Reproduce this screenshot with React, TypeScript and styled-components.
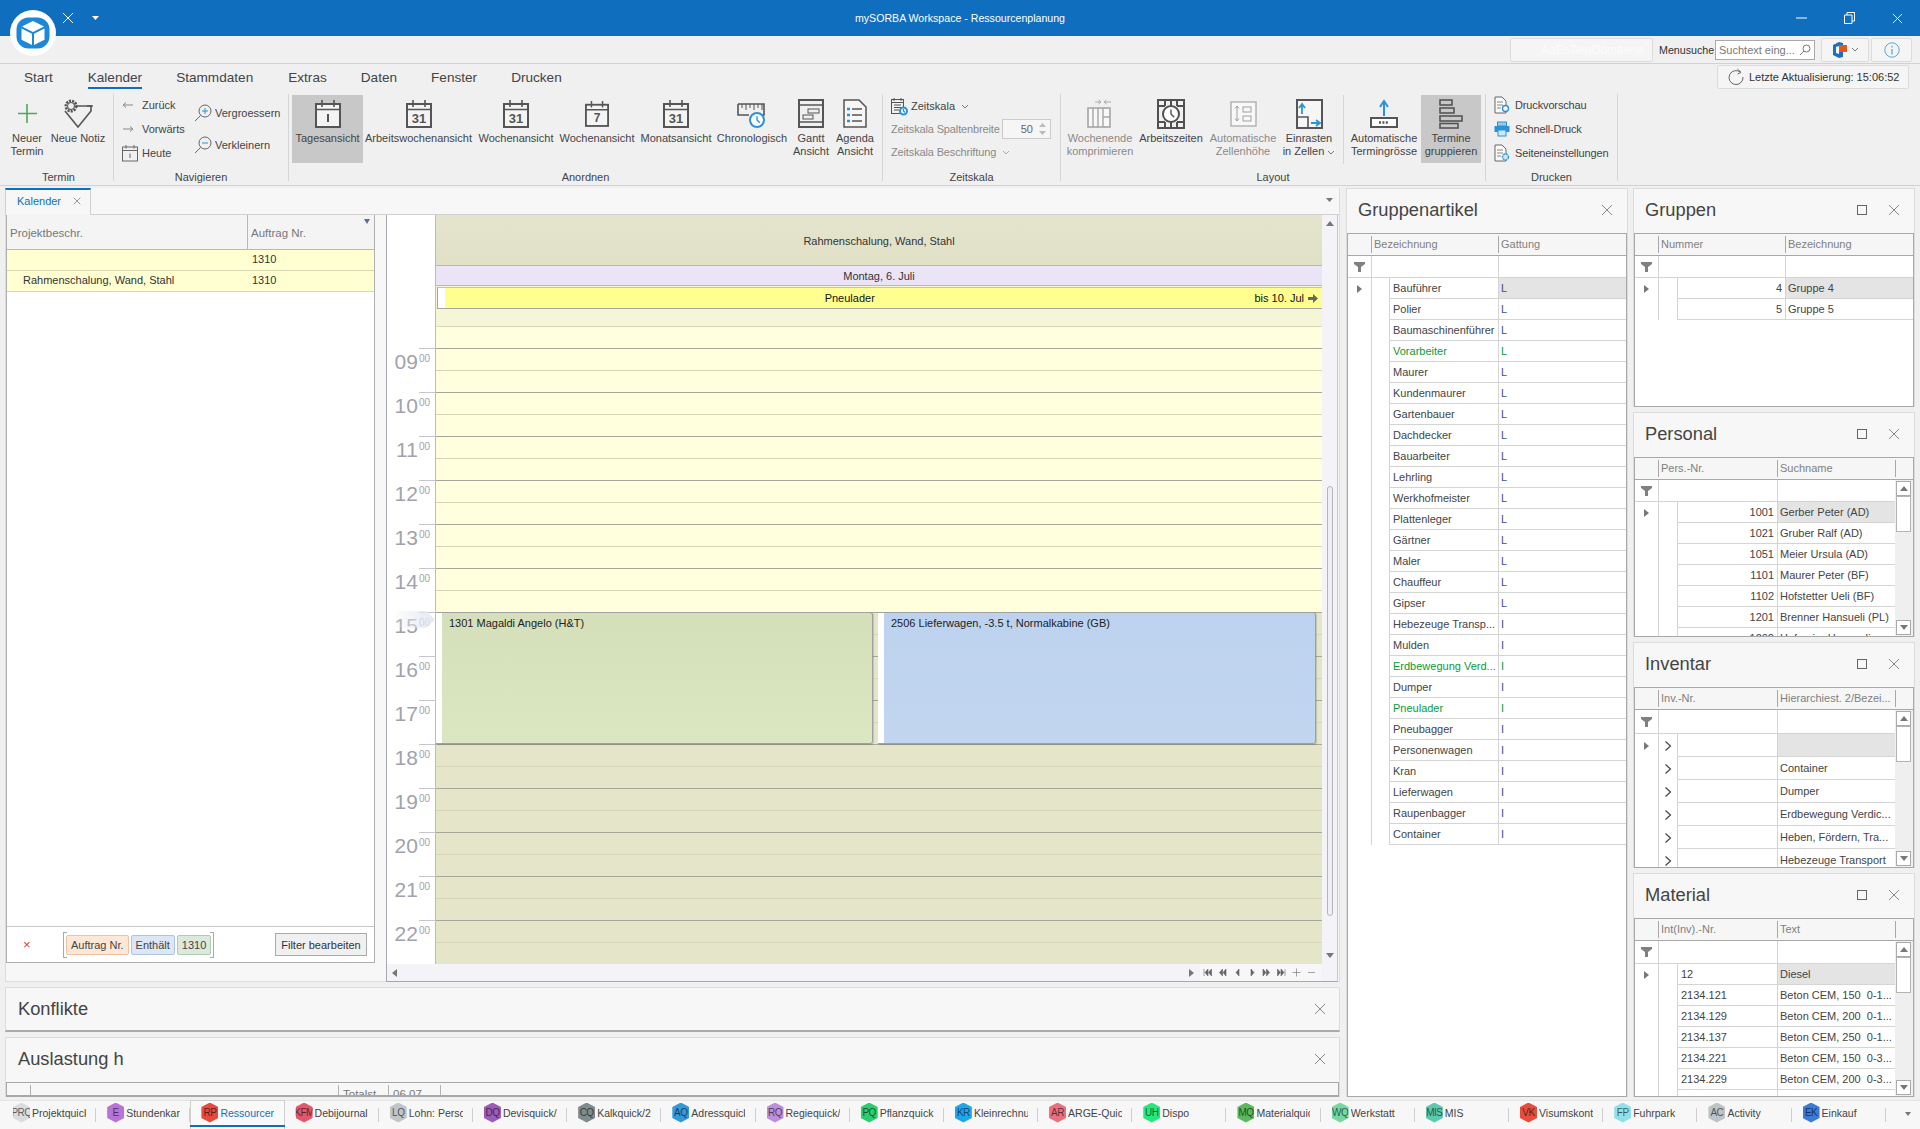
import React from "react";
import styled, { createGlobalStyle } from "styled-components";

const GlobalStyle = createGlobalStyle`
  html, body {
    margin: 0;
    padding: 0;
    background: #f0f0f0;
  }
  * {
    box-sizing: border-box;
  }
  body {
    font-family: "Liberation Sans", Arial, sans-serif;
    font-size: 11px;
    color: #444;
  }
`;

const BLUE = "#106ebe";
const ICON = "#555";
const ACCENT = "#2a93d8";

const Page = styled.div`
  position: relative;
  width: 1920px;
  height: 1129px;
  overflow: hidden;
  display: flex;
  flex-direction: column;
`;

/* title bar */
const TitleBar = styled.div`
  height: 36px;
  background: ${BLUE};
  display: grid;
  grid-template-columns: 1fr auto 1fr;
  align-items: center;
  color: #fff;
  flex: none;
`;
const TitleLeft = styled.div`
  display: flex;
  align-items: center;
  gap: 18px;
  padding-left: 62px;
`;
const TitleText = styled.div`
  font-size: 10.6px;
`;
const WindowButtons = styled.div`
  display: flex;
  justify-content: flex-end;
  margin-right: -1px;
`;
const WindowButton = styled.div`
  width: 48px;
  height: 36px;
  display: flex;
  align-items: center;
  justify-content: center;
`;
const Logo = styled.div`
  position: absolute;
  left: 10px;
  top: 10px;
  width: 46px;
  height: 46px;
  border-radius: 50%;
  background: #fff;
  display: flex;
  align-items: center;
  justify-content: center;
`;

/* row with the menu search */
const QuickRow = styled.div`
  height: 27px;
  flex: none;
  display: flex;
  align-items: center;
  justify-content: flex-end;
  padding: 0 8px 0 0;
  background: #f0f0f0;
`;
const DomainBox = styled.div`
  width: 143px;
  height: 24px;
  border: 1px solid #dcdcdc;
  background: #f5f5f5;
  border-radius: 2px;
  color: #fcfcfc;
  font-size: 12px;
  line-height: 22px;
  padding-left: 30px;
  white-space: nowrap;
  overflow: hidden;
`;
const SearchLabel = styled.div`
  width: 56px;
  margin-left: 6px;
  color: #333;
  font-size: 10.7px;
`;
const SearchInput = styled.div`
  width: 100px;
  height: 20px;
  border: 1px solid #aaa;
  background: #fff;
  color: #777;
  font-size: 11px;
  line-height: 18px;
  padding-left: 3px;
  display: flex;
  justify-content: space-between;
  align-items: center;
  padding-right: 3px;
  white-space: nowrap;
`;
const ToolButton = styled.div<{ $w: number; $ml: number }>`
  width: ${(p) => p.$w}px;
  margin-left: ${(p) => p.$ml}px;
  height: 24px;
  border: 1px solid #dcdcdc;
  border-radius: 2px;
  background: #f5f5f5;
  display: flex;
  align-items: center;
  justify-content: center;
  gap: 3px;
`;

/* ribbon */
const Ribbon = styled.div`
  height: 123px;
  flex: none;
  border-top: 1px solid #d2d2d2;
  border-bottom: 1px solid #d2d2d2;
  background: #f0f0f0;
  display: flex;
  flex-direction: column;
`;
const RibbonTabs = styled.div`
  height: 27px;
  display: flex;
  align-items: flex-start;
  padding: 0 11px 0 24px;
`;
const RibbonTab = styled.div<{ $active?: boolean; $ml: number }>`
  margin-left: ${(p) => p.$ml}px;
  margin-top: 5px;
  height: 20px;
  font-size: 13.6px;
  line-height: 18px;
  color: #444;
  border-bottom: ${(p) => (p.$active ? `2px solid ${BLUE}` : "none")};
`;
const UpdateButton = styled.div`
  margin-left: auto;
  margin-top: 1px;
  width: 192px;
  height: 24px;
  border: 1px solid #dcdcdc;
  background: #f5f5f5;
  border-radius: 2px;
  display: flex;
  align-items: center;
  gap: 5px;
  padding-left: 10px;
  font-size: 11px;
  color: #333;
`;
const RibbonBody = styled.div`
  display: flex;
  padding: 3px 0 0 4px;
`;
const Group = styled.div<{ $w: number }>`
  width: ${(p) => p.$w}px;
  height: 90px;
  display: flex;
  flex-direction: column;
  padding-top: 1px;
`;
const GroupItems = styled.div<{ $pl: number }>`
  height: 68px;
  display: flex;
  padding-left: ${(p) => p.$pl}px;
`;
const GroupLabel = styled.div`
  margin-top: auto;
  line-height: 14px;
  text-align: center;
  color: #444;
`;
const GroupSep = styled.div`
  width: 1px;
  height: 87px;
  background: #d6d6d6;
  flex: none;
`;
const ItemSep = styled.div`
  width: 1px;
  height: 69px;
  margin: 0 3px 0 3px;
  background: #d6d6d6;
  flex: none;
`;
const LargeButton = styled.div<{ $w: number; $on?: boolean; $off?: boolean }>`
  width: ${(p) => p.$w}px;
  height: 68px;
  flex: none;
  background: ${(p) => (p.$on ? "#c8c8c8" : "transparent")};
  color: ${(p) => (p.$off ? "#8a8a8a" : "#444")};
  display: flex;
  flex-direction: column;
  align-items: center;
  text-align: center;
  line-height: 13px;
  white-space: nowrap;
`;
const LargeIcon = styled.div`
  height: 37px;
  flex: none;
  display: flex;
  align-items: center;
  justify-content: center;
`;
const LargeText = styled.div`
  white-space: nowrap;
`;
const SmallColumn = styled.div<{ $w: number; $gap: number; $pt: number }>`
  width: ${(p) => p.$w}px;
  display: flex;
  flex-direction: column;
  gap: ${(p) => p.$gap}px;
  padding-top: ${(p) => p.$pt}px;
  flex: none;
`;
const SmallItem = styled.div<{ $off?: boolean; $tight?: boolean }>`
  height: 16px;
  display: flex;
  align-items: center;
  white-space: nowrap;
  color: ${(p) => (p.$off ? "#8a8a8a" : "#444")};
  letter-spacing: ${(p) => (p.$off || p.$tight ? "-0.14px" : "normal")};
`;
const SmallIcon = styled.div<{ $w: number }>`
  width: ${(p) => p.$w}px;
  flex: none;
  display: flex;
  align-items: center;
`;
const SpinBox = styled.div`
  width: 49px;
  height: 20px;
  margin-left: 2px;
  border: 1px solid #ccc;
  background: #f6f6f6;
  color: #666;
  display: flex;
  align-items: center;
  justify-content: flex-end;
  gap: 6px;
  padding-right: 4px;
  font-size: 11px;
`;

/* workspace */
const Workspace = styled.div`
  height: 914px;
  flex: none;
  display: flex;
  padding: 2px 0 3px 5px;
  gap: 6px;
  background: #f0f0f0;
`;
const MainColumn = styled.div`
  width: 1335px;
  display: flex;
  flex-direction: column;
  gap: 5px;
`;
const DocHost = styled.div`
  height: 794px;
  flex: none;
  border: 1px solid #dcdcdc;
  border-top: none;
  background: #f7f7f7;
  display: flex;
  flex-direction: column;
`;
const DocStrip = styled.div`
  height: 27px;
  flex: none;
  border-bottom: 1px solid #d0d0d0;
  display: flex;
  justify-content: space-between;
  margin-left: -1px;
  padding-right: 6px;
`;
const DocTab = styled.div`
  width: 86px;
  height: 27px;
  border-top: 2px solid ${BLUE};
  border-left: 1px solid #d0d0d0;
  border-right: 1px solid #d0d0d0;
  background: #f7f7f7;
  color: ${BLUE};
  font-size: 11px;
  display: flex;
  align-items: center;
  justify-content: space-between;
  padding: 0 9px 3px 11px;
`;
const DocBody = styled.div`
  flex: 1;
  min-height: 0;
  display: flex;
  gap: 11px;
  padding: 0 1px 0 0;
`;

/* left project list */
const ProjectList = styled.div`
  width: 369px;
  height: 748px;
  flex: none;
  border: 1px solid #b0b0b0;
  border-top: none;
  background: #fff;
  display: flex;
  flex-direction: column;
`;
const ProjectHead = styled.div`
  height: 35px;
  flex: none;
  display: grid;
  grid-template-columns: 240px 1fr;
  background: #f4f4f4;
  border-bottom: 1px solid #b8b8b8;
  color: #777;
  font-size: 11.5px;
`;
const ProjectHeadCell = styled.div<{ $line?: boolean }>`
  position: relative;
  padding: 12px 0 0 3px;
  border-left: ${(p) => (p.$line ? "1px solid #b8b8b8" : "none")};
`;
const HeadFunnel = styled.div`
  position: absolute;
  right: 4px;
  top: 4px;
  width: 0;
  height: 0;
  border-left: 3px solid transparent;
  border-right: 3px solid transparent;
  border-top: 5px solid #5b6f9a;
`;
const ProjectRow = styled.div`
  height: 21px;
  flex: none;
  display: grid;
  grid-template-columns: 240px 1fr;
  background: #ffffd2;
  border-bottom: 1px solid #d8d8b0;
  line-height: 19px;
  font-size: 11px;
  color: #333;
`;
const ProjectCell = styled.div<{ $indent?: number }>`
  padding-left: ${(p) => p.$indent ?? 5}px;
`;
const ProjectSpacer = styled.div`
  flex: 1;
`;
const FilterBar = styled.div`
  height: 36px;
  flex: none;
  border-top: 1px solid #c8c8c8;
  display: flex;
  align-items: center;
  padding: 0 7px 0 16px;
`;
const FilterRemove = styled.div`
  width: 40px;
  color: #d93a4a;
  font-size: 13px;
`;
const FilterBracket = styled.div`
  display: flex;
  gap: 2px;
  height: 26px;
  padding: 3px 2px;
  border-left: 1px solid #aaa;
  border-right: 1px solid #aaa;
  background-image: linear-gradient(#aaa, #aaa), linear-gradient(#aaa, #aaa), linear-gradient(#aaa, #aaa),
    linear-gradient(#aaa, #aaa);
  background-size: 3px 1px;
  background-repeat: no-repeat;
  background-position: left top, right top, left bottom, right bottom;
`;
const FilterChip = styled.div<{ $bg: string; $line: string }>`
  height: 20px;
  padding: 0 4px;
  border: 1px solid ${(p) => p.$line};
  border-radius: 2px;
  background: ${(p) => p.$bg};
  line-height: 18px;
  font-size: 11px;
  color: #444;
`;
const FilterEdit = styled.div`
  margin-left: auto;
  width: 92px;
  height: 23px;
  border: 1px solid #aaa;
  background: #f0f0f0;
  text-align: center;
  line-height: 22px;
  font-size: 11px;
  color: #333;
`;

/* calendar */
const Calendar = styled.div`
  width: 952px;
  height: 767px;
  flex: none;
  border-left: 1px solid #a8a8b4;
  border-right: 1px solid #c8c8d0;
  border-bottom: 1px solid #a8a8b4;
  display: flex;
  flex-direction: column;
  background: #f4f4f8;
`;
const CalendarTop = styled.div`
  height: 749px;
  flex: none;
  display: flex;
`;
const TimeColumn = styled.div`
  width: 48px;
  flex: none;
  position: relative;
  background: #fff;
  overflow: hidden;
`;
const TimeSpacer = styled.div`
  height: 133px;
`;
const HourCell = styled.div`
  height: 44px;
  position: relative;
  display: flex;
  justify-content: flex-end;
  padding-right: 5px;
  color: #a2a2ac;
  &::before {
    content: "";
    position: absolute;
    left: 32px;
    right: 0;
    top: 0;
    border-top: 1px solid #c6c6d0;
  }
`;
const HourBig = styled.span`
  font-size: 21px;
  line-height: 28px;
`;
const HourSmall = styled.span`
  font-size: 10px;
  line-height: 22px;
  margin-left: 1px;
`;
const NowMarker = styled.div`
  position: absolute;
  left: 8px;
  top: 396px;
  width: 40px;
  height: 17px;
  background: linear-gradient(90deg, rgba(235, 238, 248, 0.1), #e4e8f4);
  clip-path: polygon(0 0, 78% 0, 100% 50%, 78% 100%, 0 100%);
`;
const DayColumn = styled.div`
  width: 887px;
  flex: none;
  border-left: 1px solid #c0c0a8;
  display: flex;
  flex-direction: column;
`;
const ResourceHead = styled.div`
  height: 51px;
  flex: none;
  background: linear-gradient(#e5e5cf, #e0e0c6);
  border-bottom: 1px solid #bcbca6;
  display: flex;
  align-items: center;
  justify-content: center;
  padding-top: 1px;
  color: #333;
  font-size: 11px;
`;
const DayHead = styled.div`
  height: 20px;
  flex: none;
  background: #ebe4f6;
  border-bottom: 1px solid #b8b8c0;
  text-align: center;
  line-height: 20px;
  color: #333;
  font-size: 11px;
`;
const AllDayRow = styled.div`
  height: 23px;
  flex: none;
  padding: 1px 0 0 1px;
  background: #f5f5d8;
`;
const AllDayBar = styled.div`
  height: 22px;
  background: #ffff90;
  border: 1px solid #a6a6a6;
  border-right: none;
  border-top-color: #c8c8a0;
  display: grid;
  grid-template-columns: 7px 1fr auto;
  align-items: center;
  font-size: 11px;
  color: #111;
`;
const AllDayStripe = styled.div`
  height: 100%;
  background: #fff;
`;
const AllDayTitle = styled.div`
  text-align: center;
`;
const AllDayEnd = styled.div`
  display: flex;
  align-items: center;
  gap: 4px;
  padding-right: 4px;
`;
const Slots = styled.div`
  position: relative;
  flex: 1;
  min-height: 0;
  overflow: hidden;
`;
const Slot = styled.div<{ $h: number; $line: string; $bg: string }>`
  height: ${(p) => p.$h}px;
  background: ${(p) => p.$bg};
  border-top: 1px solid ${(p) => p.$line};
`;
const Appointment = styled.div<{ $left: number; $width: number; $from: string; $to: string }>`
  position: absolute;
  left: ${(p) => p.$left}px;
  width: ${(p) => p.$width}px;
  top: 303px;
  height: 132px;
  border: 1px solid #a0a0a0;
  border-left: none;
  border-radius: 0 3px 3px 0;
  background: linear-gradient(${(p) => p.$from}, ${(p) => p.$to});
  display: flex;
  box-shadow: 1px 1px 1px rgba(0, 0, 0, 0.15);
  color: #222;
  font-size: 11px;
`;
const AppointmentStripe = styled.div`
  width: 6px;
  flex: none;
  background: #fff;
`;
const AppointmentText = styled.div`
  padding: 4px 0 0 7px;
`;
const VScroll = styled.div`
  width: 15px;
  flex: none;
  background: #f4f4f8;
  position: relative;
  display: flex;
  flex-direction: column;
  align-items: center;
  padding: 6px 0;
  justify-content: space-between;
`;
const VThumb = styled.div`
  position: absolute;
  left: 5px;
  top: 271px;
  width: 6px;
  height: 430px;
  border: 1px solid #b4b4bc;
  border-radius: 3px;
  background: #f0f0f4;
`;
const HScroll = styled.div`
  flex: 1;
  display: flex;
  align-items: center;
  padding-left: 5px;
`;
const HScrollGap = styled.div`
  flex: 1;
`;
const Navigator = styled.div`
  width: 121px;
  height: 100%;
  margin: 0 16px 0 6px;
  background: #f7f7fa;
  display: flex;
  align-items: center;
  justify-content: space-between;
  padding: 0 5px 0 3px;
`;

/* docked panels */
const DockPanel = styled.div<{ $h?: number; $w?: number; $fill?: boolean }>`
  ${(p) => (p.$h ? `height: ${p.$h}px; flex: none;` : "")}
  ${(p) => (p.$w ? `width: ${p.$w}px; flex: none;` : "")}
  ${(p) => (p.$fill ? "flex: 1; min-height: 0;" : "")}
  border: 1px solid #dcdcdc;
  border-bottom: none;
  background: #f7f7f7;
  display: flex;
  flex-direction: column;
  overflow: hidden;
`;
const PanelHead = styled.div`
  height: 44px;
  flex: none;
  display: flex;
  align-items: center;
  justify-content: space-between;
  padding: 0 12px 3px 11px;
`;
const PanelTitle = styled.div`
  font-size: 18.3px;
  color: #444;
`;
const PanelIcons = styled.div`
  display: flex;
  align-items: center;
  gap: 16px;
`;
const PanelIcon = styled.div`
  width: 16px;
  display: flex;
  justify-content: center;
`;
const CollapsedPanel = styled.div`
  height: 45px;
  flex: none;
  border: 1px solid #dcdcdc;
  border-bottom: 2px solid #aaa;
  background: #f7f7f7;
  display: flex;
  align-items: center;
  justify-content: space-between;
  padding: 0 11px 0 12px;
`;
const LoadPanel = styled.div`
  flex: 1;
  min-height: 0;
  border: 1px solid #dcdcdc;
  border-bottom: none;
  background: #f7f7f7;
  display: flex;
  flex-direction: column;
`;
const LoadHead = styled.div`
  flex: 1;
  display: flex;
  align-items: center;
  justify-content: space-between;
  padding: 0 11px 2px 12px;
`;
const LoadGrid = styled.div`
  height: 15px;
  flex: none;
  border: 1px solid #a8a8a8;
  border-bottom-width: 2px;
  display: grid;
  grid-template-columns: 23px 308px 50px 52px 1fr;
  overflow: hidden;
  color: #777;
  font-size: 11.5px;
`;
const LoadCell = styled.div<{ $line?: boolean }>`
  border-left: ${(p) => (p.$line ? "1px solid #b4b4b4" : "none")};
  padding: 3px 0 0 4px;
  margin-top: 2px;
  white-space: nowrap;
`;
const RightColumn = styled.div`
  width: 282px;
  margin-left: -1px;
  display: flex;
  flex-direction: column;
  gap: 5px;
`;

/* small data grids */
const GridBox = styled.div`
  flex: 1;
  min-height: 0;
  border: 1px solid #a8a8a8;
  background: #fff;
  display: flex;
  flex-direction: column;
  overflow: hidden;
`;
const GridHeadRow = styled.div<{ $cols: string }>`
  height: 22px;
  flex: none;
  display: grid;
  grid-template-columns: ${(p) => p.$cols};
  background: #f6f6f6;
  border-bottom: 1px solid #a8a8a8;
  color: #808080;
  font-size: 11px;
  line-height: 20px;
  white-space: nowrap;
`;
const HeadCell = styled.div<{ $span?: number; $line?: boolean }>`
  grid-column: span ${(p) => p.$span ?? 1};
  padding-left: 3px;
  overflow: hidden;
  position: relative;
  ${(p) =>
    p.$line
      ? `&::before { content: ""; position: absolute; left: 0; top: 2px; bottom: 2px; border-left: 1px solid #a8a8a8; }`
      : ""}
`;
const GridBody = styled.div`
  flex: 1;
  min-height: 0;
  display: flex;
`;
const GridRows = styled.div`
  flex: 1;
  min-width: 0;
  overflow: hidden;
`;
const FilterRow = styled.div<{ $cols: string; $h: number }>`
  height: ${(p) => p.$h}px;
  display: grid;
  grid-template-columns: ${(p) => p.$cols};
  border-bottom: 1px solid #d4d4d4;
`;
const FilterIconCell = styled.div`
  display: flex;
  align-items: center;
  justify-content: center;
`;
const BlankCell = styled.div<{ $span?: number }>`
  grid-column: span ${(p) => p.$span ?? 1};
  border-left: 1px solid #d4d4d4;
`;
const DataRow = styled.div<{ $cols: string; $h: number }>`
  height: ${(p) => p.$h}px;
  display: grid;
  grid-template-columns: ${(p) => p.$cols};
  font-size: 11px;
`;
const IndicatorCell = styled.div`
  display: flex;
  align-items: center;
  justify-content: center;
`;
const IndentCell = styled.div`
  border-left: 1px solid #d4d4d4;
  display: flex;
  align-items: center;
  justify-content: center;
`;
const DataCell = styled.div<{ $color?: string; $selected?: boolean; $right?: boolean; $pl?: number }>`
  border-left: 1px solid #d4d4d4;
  border-bottom: 1px solid #d4d4d4;
  color: ${(p) => p.$color ?? "#444"};
  background: ${(p) => (p.$selected ? "#e4e4e4" : "#fff")};
  padding: 0 3px 0 ${(p) => p.$pl ?? 3}px;
  display: flex;
  align-items: center;
  justify-content: ${(p) => (p.$right ? "flex-end" : "flex-start")};
  white-space: pre;
  overflow: hidden;
`;
const GridScroll = styled.div`
  width: 18px;
  flex: none;
  background: #efefef;
  display: flex;
  flex-direction: column;
  padding: 1px 2px 1px 1px;
`;
const ScrollButton = styled.div`
  height: 15px;
  flex: none;
  background: #fff;
  border: 1px solid #aaa;
  display: flex;
  align-items: center;
  justify-content: center;
`;
const ScrollThumb = styled.div<{ $h: number }>`
  height: ${(p) => p.$h}px;
  flex: none;
  background: #fff;
  border: 1px solid #b4b4b4;
`;
const ScrollGap = styled.div`
  flex: 1;
`;

/* module tabs */
const ModuleBar = styled.div`
  flex: 1;
  background: #f7f7f7;
  border-top: 1px solid #e4e4e4;
  display: flex;
  padding-left: 2px;
  position: relative;
`;
const ModuleTab = styled.div<{ $active?: boolean }>`
  width: 94.2px;
  flex: none;
  display: flex;
  align-items: center;
  gap: 2px;
  padding: 0 0 5px 11px;
  position: relative;
  color: ${(p) => (p.$active ? BLUE : "#444")};
  ${(p) =>
    p.$active
      ? `border: 1px solid #d0d0d0; border-bottom: none; margin-top: -1px; padding-left: 10px; background: #f9f9f9;
         &::after { content: ""; position: absolute; left: -1px; right: -1px; bottom: 2px; height: 2px; background: ${BLUE}; }`
      : `&::after { content: ""; position: absolute; right: 0; top: 7px; bottom: 7px; border-right: 1px solid #d0d0d0; }`}
`;
const ModuleHex = styled.div<{ $color: string }>`
  width: 17px;
  height: 20px;
  flex: none;
  background: ${(p) => p.$color};
  clip-path: polygon(50% 0, 100% 22%, 100% 78%, 50% 100%, 0 78%, 0 22%);
  display: flex;
  align-items: center;
  justify-content: center;
  font-size: 10px;
  letter-spacing: -0.5px;
  color: rgba(0, 0, 0, 0.6);
  white-space: nowrap;
`;
const ModuleLabel = styled.div`
  width: 54px;
  overflow: hidden;
  white-space: nowrap;
  font-size: 10.5px;
`;
const ModuleMore = styled.div`
  position: absolute;
  right: 9px;
  top: 11px;
  width: 0;
  height: 0;
  border-left: 3px solid transparent;
  border-right: 3px solid transparent;
  border-top: 4px solid #777;
`;

/* drawings */
const CloseX = ({ size = 12, color = "#8a8a8a" }: { size?: number; color?: string }) => (
  <svg width={size} height={size} viewBox="0 0 12 12">
    <path d="M1 1 11 11M11 1 1 11" stroke={color} strokeWidth="1" fill="none" />
  </svg>
);
const MaxBox = () => (
  <svg width="10" height="10" viewBox="0 0 10 10">
    <rect x="0.5" y="0.5" width="9" height="9" stroke="#666" fill="none" />
  </svg>
);
const Tri = ({ dir, color = "#777" }: { dir: "up" | "down" | "left" | "right"; color?: string }) => {
  const pts = {
    up: "0,5 4,0 8,5",
    down: "0,0 8,0 4,5",
    left: "5,0 5,8 0,4",
    right: "0,0 0,8 5,4",
  }[dir];
  const vertical = dir === "up" || dir === "down";
  return (
    <svg width={vertical ? 8 : 5} height={vertical ? 5 : 8}>
      <polygon points={pts} fill={color} />
    </svg>
  );
};
const Chevron = ({ color = "#777" }: { color?: string }) => (
  <svg width="8" height="5" viewBox="0 0 8 5">
    <path d="M1 1 4 4 7 1" stroke={color} fill="none" />
  </svg>
);
const Funnel = () => (
  <svg width="11" height="10" viewBox="0 0 11 10">
    <path d="M0 0H11V2L7 5V10H4V5L0 2Z" fill="#808080" />
  </svg>
);
const Cal = ({ n, w = 26 }: { n?: string; w?: number }) => (
  <svg width={w} height="29" viewBox="0 0 26 29">
    <rect x="1" y="5" width="24" height="23" fill="#f4f4f4" stroke={ICON} strokeWidth="2" />
    <path d="M1 10.5H25M7 1V8M19 1V8" stroke={ICON} strokeWidth="1.6" fill="none" />
    {n ? (
      <text x="13" y="24" textAnchor="middle" fontSize="13" fontWeight="700" fill={ICON} fontFamily="Liberation Sans">
        {n}
      </text>
    ) : (
      <path d="M13 15V23" stroke={ICON} strokeWidth="2" />
    )}
  </svg>
);
const Clock = ({ x, y, r, color = ACCENT }: { x: number; y: number; r: number; color?: string }) => (
  <g>
    <circle cx={x} cy={y} r={r} fill="#fff" stroke={color} strokeWidth="2" />
    <path d={`M${x} ${y - r * 0.55}V${y}L${x + r * 0.4} ${y + r * 0.4}`} stroke={color} strokeWidth="1.4" fill="none" />
  </g>
);
const IconPlus = () => (
  <svg width="22" height="26" viewBox="0 0 22 26">
    <path d="M11 3V22M2 12.5H21" stroke="#4fa85a" strokeWidth="1.6" />
  </svg>
);
const IconNote = () => (
  <svg width="30" height="29" viewBox="0 0 30 29">
    <path d="M2 12 15 28 28 12V7H13" stroke={ICON} strokeWidth="1.6" fill="none" />
    <circle cx="8" cy="7" r="5" stroke={ICON} strokeWidth="3" strokeDasharray="2 1" fill="#f0f0f0" />
    <circle cx="8" cy="7" r="3.5" stroke={ICON} strokeWidth="1" fill="#f0f0f0" />
    <path d="M24 7H30" stroke={ICON} strokeWidth="1.4" />
  </svg>
);
const IconArrow = ({ back }: { back?: boolean }) => (
  <svg width="12" height="8" viewBox="0 0 12 8">
    <path d={back ? "M11 4H2M4 1.5 1 4 4 6.5" : "M1 4H10M8 1.5 11 4 8 6.5"} stroke="#888" fill="none" />
  </svg>
);
const IconToday = () => (
  <svg width="16" height="18" viewBox="0 0 16 18">
    <rect x="0.5" y="3" width="15" height="14" fill="none" stroke="#666" />
    <path d="M0.5 6.5H15.5M4 1V4.5M12 1V4.5M8 9.5V14" stroke="#666" fill="none" />
  </svg>
);
const IconZoom = ({ plus }: { plus?: boolean }) => (
  <svg width="18" height="18" viewBox="0 0 18 18">
    <circle cx="11" cy="7" r="6" fill="none" stroke="#666" />
    <path d="M6.5 11.5 1 17" stroke="#666" fill="none" />
    <path d={plus ? "M8 7H14M11 4V10" : "M8 7H14"} stroke={ACCENT} fill="none" />
  </svg>
);
const IconChrono = () => (
  <svg width="30" height="30" viewBox="0 0 30 30">
    <path d="M1 5H27V16H15M1 5V16H12" fill="none" stroke={ICON} strokeWidth="1.6" />
    <path d="M5 5V9M9 5V11M13 5V9M17 5V11M21 5V9M25 5V11" stroke={ICON} />
    <Clock x={20} y={21} r={7} />
  </svg>
);
const IconGantt = () => (
  <svg width="26" height="29" viewBox="0 0 26 29">
    <rect x="1" y="1" width="24" height="27" fill="none" stroke={ICON} strokeWidth="2" />
    <path d="M1 6H25M1 23H25" stroke={ICON} strokeWidth="1.6" />
    <rect x="10" y="10" width="11" height="4" fill="none" stroke={ICON} />
    <rect x="5" y="16" width="10" height="4" fill="none" stroke={ICON} />
  </svg>
);
const IconAgenda = () => (
  <svg width="24" height="29" viewBox="0 0 24 29">
    <path d="M1 1H16L23 8V28H1Z" fill="#f6f6f6" stroke={ICON} strokeWidth="1.5" />
    <path d="M9 10H19M9 16H19M9 22H19" stroke={ICON} strokeWidth="1.5" />
    <path d="M4 10H7M4 16H7M4 22H7" stroke={ACCENT} strokeWidth="2.4" />
  </svg>
);
const IconScale = () => (
  <svg width="17" height="19" viewBox="0 0 17 19">
    <rect x="0.5" y="2.5" width="12" height="14" fill="none" stroke="#555" />
    <path d="M0.5 5.5H12.5M3 1V4M10 1V4M3 8H10M3 10.5H10M3 13H8" stroke="#555" fill="none" />
    <Clock x={12.5} y={14} r={3.5} />
  </svg>
);
const IconCompress = () => (
  <svg width="26" height="29" viewBox="0 0 26 29">
    <path d="M8 3H14M11.5 1 14 3 11.5 5M24 3H17M19.5 1 17 3 19.5 5" stroke="#aaa" fill="none" />
    <rect x="1" y="9" width="22" height="19" fill="#f8f8f8" stroke="#a6a6a6" strokeWidth="1.6" />
    <path d="M6 9V28M11 9V28M16 9V28M16 18H23" stroke="#a6a6a6" strokeWidth="1.4" />
  </svg>
);
const IconWorkTime = () => (
  <svg width="28" height="30" viewBox="0 0 28 30">
    <rect x="1" y="1" width="26" height="28" fill="#f0f0f0" stroke="#505050" strokeWidth="2" />
    <path d="M1 7H8M20 7H27M1 23H8M20 23H27M8 1V7M20 1V7M8 23V29M20 23V29M14 1V7M14 23V29" stroke="#505050" strokeWidth="2" />
    <Clock x={14} y={15} r={8} color="#505050" />
  </svg>
);
const IconCellHeight = () => (
  <svg width="27" height="26" viewBox="0 0 27 26">
    <rect x="1" y="1" width="25" height="24" fill="#f8f8f8" stroke="#b0b0b0" strokeWidth="1.4" />
    <path d="M7 5V20M5 7.5 7 5 9 7.5M5 17.5 7 20 9 17.5" stroke="#a0a0a0" fill="none" />
    <rect x="13" y="6" width="8" height="5" fill="none" stroke="#a0a0a0" />
    <rect x="13" y="15" width="8" height="5" fill="none" stroke="#a0a0a0" />
  </svg>
);
const IconSnap = () => (
  <svg width="27" height="30" viewBox="0 0 27 30">
    <rect x="1" y="1" width="25" height="28" fill="#f6f6f6" stroke={ICON} strokeWidth="2" />
    <path d="M1 18H12V29" fill="none" stroke={ICON} strokeWidth="1.6" />
    <path d="M6 15V6M3 9 6 5 9 9M15 24H23M20 21 24 24 20 27" stroke={ACCENT} strokeWidth="1.8" fill="none" />
  </svg>
);
const IconAutoSize = () => (
  <svg width="28" height="30" viewBox="0 0 28 30">
    <path d="M14 17V3M10 8 14 2 18 8" stroke={ACCENT} strokeWidth="2" fill="none" />
    <rect x="1" y="19" width="26" height="9" fill="#fff" stroke={ICON} strokeWidth="2" />
    <path d="M9 23.5H19" stroke={ICON} strokeWidth="2.4" strokeDasharray="2 1.4" />
  </svg>
);
const IconGroupBars = () => (
  <svg width="24" height="30" viewBox="0 0 24 30">
    <rect x="1" y="1" width="12" height="5" fill="none" stroke={ICON} strokeWidth="1.6" />
    <rect x="1" y="9" width="14" height="5" fill="none" stroke={ICON} strokeWidth="1.6" />
    <rect x="1" y="17" width="22" height="5" fill="none" stroke={ICON} strokeWidth="1.6" />
    <rect x="1" y="24.5" width="18" height="4.5" fill="none" stroke={ICON} strokeWidth="1.6" />
  </svg>
);
const IconPage = ({ badge }: { badge: "search" | "gear" }) => (
  <svg width="16" height="18" viewBox="0 0 16 18">
    <path d="M1 1H8L12 5V17H1Z" fill="#fafafa" stroke="#666" />
    <path d="M3 6H9M3 9H9M3 12H7" stroke="#888" />
    {badge === "search" ? (
      <circle cx="11.5" cy="12.5" r="3" fill="#fff" stroke={ACCENT} strokeWidth="1.4" />
    ) : (
      <circle cx="11.5" cy="13" r="3" fill="#cfe6f6" stroke={ACCENT} strokeWidth="1.4" strokeDasharray="2 0.8" />
    )}
  </svg>
);
const IconPrinter = () => (
  <svg width="16" height="16" viewBox="0 0 16 16">
    <rect x="3.5" y="1" width="9" height="4" fill="#9cc9ea" stroke={ACCENT} />
    <rect x="0.5" y="5" width="15" height="6" fill={ACCENT} />
    <rect x="4" y="9" width="8" height="6" fill="#cfe6f6" stroke={ACCENT} />
  </svg>
);
const IconRefresh = () => (
  <svg width="16" height="18" viewBox="0 0 16 18">
    <path d="M12.5 4.2A7 7 0 1 0 15 9" stroke="#666" fill="none" />
    <path d="M9.5 1 13 4.4 9.6 6" stroke="#666" fill="none" />
  </svg>
);
const IconOffice = () => (
  <svg width="16" height="18" viewBox="0 0 16 18">
    <path d="M7 1 1 4V14L7 17 11 16V2Z" fill="#1d6fc4" />
    <path d="M4 6 7 5V13L4 12Z" fill="#f7f7f7" />
    <rect x="7" y="4" width="8" height="7" fill="#e8541c" />
  </svg>
);
const IconInfo = () => (
  <svg width="16" height="16" viewBox="0 0 16 16">
    <circle cx="8" cy="8" r="7.2" fill="none" stroke="#5aa5dd" />
    <path d="M8 7V12.5M8 3.8V5.4" stroke="#5aa5dd" strokeWidth="1.3" />
  </svg>
);
const IconSearch = () => (
  <svg width="12" height="12" viewBox="0 0 12 12">
    <circle cx="7.5" cy="4.5" r="3.5" fill="none" stroke="#777" />
    <path d="M5 7 1 11" stroke="#777" />
  </svg>
);
const IconLogo = () => (
  <svg width="34" height="32" viewBox="0 0 34 32">
    <rect x="0.5" y="0.5" width="33" height="31" rx="12" fill="#1e88d8" />
    <path d="M17 4 28 9.5 17 15 6 9.5Z" fill="#fff" />
    <path d="M5.5 11.5 16 16.8V28L5.5 22.7Z" fill="#fff" />
    <path d="M28.5 11.5 18 16.8V28L28.5 22.7Z" fill="#fff" />
  </svg>
);
const NavGlyph = ({ d }: { d: string }) => (
  <svg width="9" height="9" viewBox="0 0 9 9">
    <path d={d} fill="#666" stroke="#666" strokeWidth="0.6" />
  </svg>
);

const navGlyphs = [
  "M1 1V8M5 1V8L2 4.5ZM8.5 1V8L5.5 4.5Z",
  "M4.5 1V8L1.5 4.5ZM8 1V8L5 4.5Z",
  "M6 1V8L3 4.5Z",
  "M3 1V8L6 4.5Z",
  "M1 1V8L4 4.5ZM4.5 1V8L7.5 4.5Z",
  "M0.5 1V8L3.5 4.5ZM4 1V8L7 4.5ZM8 1V8",
  "M4.5 0.5V8.5M0.5 4.5H8.5",
  "M1 4.5H8",
];

const ribbonTabs = [
  { t: "Start", ml: 0 },
  { t: "Kalender", ml: 35 },
  { t: "Stammdaten", ml: 34 },
  { t: "Extras", ml: 35 },
  { t: "Daten", ml: 34 },
  { t: "Fenster", ml: 34 },
  { t: "Drucken", ml: 34 },
];

const arrangeButtons = [
  { w: 71, icon: <Cal />, a: "Tagesansicht", on: true },
  { w: 111, icon: <Cal n="31" />, a: "Arbeitswochenansicht" },
  { w: 84, icon: <Cal n="31" />, a: "Wochenansicht" },
  { w: 78, icon: <Cal n="7" w={24} />, a: "Wochenansicht" },
  { w: 80, icon: <Cal n="31" />, a: "Monatsansicht" },
  { w: 72, icon: <IconChrono />, a: "Chronologisch" },
  { w: 46, icon: <IconGantt />, a: "Gantt", b: "Ansicht" },
  { w: 42, icon: <IconAgenda />, a: "Agenda", b: "Ansicht" },
];

const articleNames: [string, string, string?][] = [
  ["Bauführer", "L"],
  ["Polier", "L"],
  ["Baumaschinenführer", "L"],
  ["Vorarbeiter", "L", "g"],
  ["Maurer", "L"],
  ["Kundenmaurer", "L"],
  ["Gartenbauer", "L"],
  ["Dachdecker", "L"],
  ["Bauarbeiter", "L"],
  ["Lehrling", "L"],
  ["Werkhofmeister", "L"],
  ["Plattenleger", "L"],
  ["Gärtner", "L"],
  ["Maler", "L"],
  ["Chauffeur", "L"],
  ["Gipser", "L"],
  ["Hebezeuge Transp...", "I"],
  ["Mulden", "I"],
  ["Erdbewegung Verd...", "I", "g"],
  ["Dumper", "I"],
  ["Pneulader", "I", "g"],
  ["Pneubagger", "I"],
  ["Personenwagen", "I"],
  ["Kran", "I"],
  ["Lieferwagen", "I"],
  ["Raupenbagger", "I"],
  ["Container", "I"],
];

const modules: [string, string, string][] = [
  ["PRQ", "#d9dde0", "Projektquick"],
  ["E", "#b873d8", "Stundenkarte"],
  ["RP", "#e54b3c", "Ressourcen"],
  ["KFM", "#e4566c", "Debijournal"],
  ["LQ", "#bfc5c9", "Lohn: Personal"],
  ["DQ", "#9b5bb8", "Devisquick/2"],
  ["CQ", "#7f8c8d", "Kalkquick/2"],
  ["AQ", "#3498db", "Adressquick"],
  ["RQ", "#bb8fdc", "Regiequick/2"],
  ["PQ", "#2ecc71", "Pflanzquick"],
  ["KR", "#1ea7e8", "Kleinrechnung"],
  ["AR", "#e8707f", "ARGE-Quick"],
  ["UH", "#25e87a", "Dispo"],
  ["MQ", "#5cb85c", "Materialquick"],
  ["WQ", "#76d7a4", "Werkstatt"],
  ["MIS", "#5cc8b0", "MIS"],
  ["VK", "#e74c3c", "Visumskontrolle"],
  ["FP", "#8fe0e8", "Fuhrpark"],
  ["AC", "#bdc3c7", "Activity"],
  ["EK", "#3a7bd5", "Einkauf"],
];

type GridData = {
  cols: string;
  head: [string, string];
  filterH: number;
  rowH: number;
  rows: { a: string; b: string; color?: string; bColor?: string }[];
  rightA?: boolean;
  chevrons?: boolean;
  thumb?: number;
};

const DataGrid = ({ cols, head, filterH, rowH, rows, rightA, chevrons, thumb }: GridData) => {
  const scroll = thumb !== undefined;
  return (
    <GridBox>
      <GridHeadRow $cols={scroll ? `${cols} 18px` : cols}>
        <HeadCell />
        <HeadCell $span={2} $line>
          {head[0]}
        </HeadCell>
        <HeadCell $line>{head[1]}</HeadCell>
        {scroll && <HeadCell $line />}
      </GridHeadRow>
      <GridBody>
        <GridRows>
          <FilterRow $cols={cols} $h={filterH}>
            <FilterIconCell>
              <Funnel />
            </FilterIconCell>
            <BlankCell $span={2} />
            <BlankCell />
          </FilterRow>
          {rows.map((r, i) => (
            <DataRow key={i} $cols={cols} $h={rowH}>
              <IndicatorCell>{i === 0 && <Tri dir="right" />}</IndicatorCell>
              <IndentCell>
                {chevrons && (
                  <svg width="8" height="12" viewBox="0 0 8 12">
                    <path d="M1.5 1.5 6.5 6 1.5 10.5" stroke="#444" strokeWidth="1.2" fill="none" />
                  </svg>
                )}
              </IndentCell>
              <DataCell $color={r.color} $right={rightA}>
                {r.a}
              </DataCell>
              <DataCell $color={r.bColor ?? r.color} $selected={i === 0} $pl={2}>
                {r.b}
              </DataCell>
            </DataRow>
          ))}
        </GridRows>
        {scroll && (
          <GridScroll>
            <ScrollButton>
              <Tri dir="up" />
            </ScrollButton>
            <ScrollThumb $h={thumb as number} />
            <ScrollGap />
            <ScrollButton>
              <Tri dir="down" />
            </ScrollButton>
          </GridScroll>
        )}
      </GridBody>
    </GridBox>
  );
};

const Panel = ({ title, h, w, fill, max = true, children }: { title: string; h?: number; w?: number; fill?: boolean; max?: boolean; children: React.ReactNode }) => (
  <DockPanel $h={h} $w={w} $fill={fill}>
    <PanelHead>
      <PanelTitle>{title}</PanelTitle>
      <PanelIcons>
        {max && (
          <PanelIcon>
            <MaxBox />
          </PanelIcon>
        )}
        <PanelIcon>
          <CloseX />
        </PanelIcon>
      </PanelIcons>
    </PanelHead>
    {children}
  </DockPanel>
);

const hours = ["09", "10", "11", "12", "13", "14", "15", "16", "17", "18", "19", "20", "21", "22"];
const GREEN = "#0a9a3c";

export default function App() {
  return (
    <Page>
      <GlobalStyle />
      <TitleBar>
        <TitleLeft>
          <CloseX size={12} color="#fff" />
          <svg width="7" height="4" viewBox="0 0 7 4">
            <polygon points="0,0 7,0 3.5,4" fill="#fff" />
          </svg>
        </TitleLeft>
        <TitleText>mySORBA Workspace - Ressourcenplanung</TitleText>
        <WindowButtons>
          <WindowButton>
            <svg width="11" height="2" viewBox="0 0 11 2">
              <path d="M0 1H11" stroke="#fff" />
            </svg>
          </WindowButton>
          <WindowButton>
            <svg width="11" height="12" viewBox="0 0 11 12">
              <path d="M3 3V0.5H10.5V9H8M0.5 3H8V11.5H0.5Z" stroke="#fff" fill="none" />
            </svg>
          </WindowButton>
          <WindowButton>
            <CloseX size={11} color="#fff" />
          </WindowButton>
        </WindowButtons>
      </TitleBar>
      <Logo>
        <IconLogo />
      </Logo>

      <QuickRow>
        <DomainBox>AaEsTestDomaene</DomainBox>
        <SearchLabel>Menusuche</SearchLabel>
        <SearchInput>
          Suchtext eing...
          <IconSearch />
        </SearchInput>
        <ToolButton $w={48} $ml={6}>
          <IconOffice />
          <Chevron />
        </ToolButton>
        <ToolButton $w={41} $ml={2}>
          <IconInfo />
        </ToolButton>
      </QuickRow>

      <Ribbon>
        <RibbonTabs>
          {ribbonTabs.map((t) => (
            <RibbonTab key={t.t} $ml={t.ml} $active={t.t === "Kalender"}>
              {t.t}
            </RibbonTab>
          ))}
          <UpdateButton>
            <IconRefresh />
            Letzte Aktualisierung: 15:06:52
          </UpdateButton>
        </RibbonTabs>
        <RibbonBody>
          <Group $w={109}>
            <GroupItems $pl={2}>
              <LargeButton $w={42}>
                <LargeIcon>
                  <IconPlus />
                </LargeIcon>
                Neuer
                <br />
                Termin
              </LargeButton>
              <LargeButton $w={60}>
                <LargeIcon>
                  <IconNote />
                </LargeIcon>
                Neue Notiz
              </LargeButton>
            </GroupItems>
            <GroupLabel>Termin</GroupLabel>
          </Group>
          <GroupSep />
          <Group $w={174}>
            <GroupItems $pl={8}>
              <SmallColumn $w={72} $gap={8} $pt={2}>
                <SmallItem>
                  <SmallIcon $w={20}>
                    <IconArrow back />
                  </SmallIcon>
                  Zurück
                </SmallItem>
                <SmallItem>
                  <SmallIcon $w={20}>
                    <IconArrow />
                  </SmallIcon>
                  Vorwärts
                </SmallItem>
                <SmallItem>
                  <SmallIcon $w={20}>
                    <IconToday />
                  </SmallIcon>
                  Heute
                </SmallItem>
              </SmallColumn>
              <SmallColumn $w={90} $gap={16} $pt={10}>
                <SmallItem>
                  <SmallIcon $w={21}>
                    <IconZoom plus />
                  </SmallIcon>
                  Vergroessern
                </SmallItem>
                <SmallItem>
                  <SmallIcon $w={21}>
                    <IconZoom />
                  </SmallIcon>
                  Verkleinern
                </SmallItem>
              </SmallColumn>
            </GroupItems>
            <GroupLabel>Navigieren</GroupLabel>
          </Group>
          <GroupSep />
          <Group $w={593}>
            <GroupItems $pl={3}>
              {arrangeButtons.map((b, i) => (
                <LargeButton key={i} $w={b.w} $on={b.on}>
                  <LargeIcon>{b.icon}</LargeIcon>
                  {b.a}
                  {b.b && (
                    <>
                      <br />
                      {b.b}
                    </>
                  )}
                </LargeButton>
              ))}
            </GroupItems>
            <GroupLabel>Anordnen</GroupLabel>
          </Group>
          <GroupSep />
          <Group $w={177}>
            <GroupItems $pl={8}>
              <SmallColumn $w={165} $gap={7} $pt={3}>
                <SmallItem>
                  <SmallIcon $w={20}>
                    <IconScale />
                  </SmallIcon>
                  Zeitskala&nbsp;&nbsp;
                  <Chevron />
                </SmallItem>
                <SmallItem $off>
                  Zeitskala Spaltenbreite
                  <SpinBox>
                    50
                    <svg width="7" height="12" viewBox="0 0 7 12">
                      <path d="M0 4 3.5 0 7 4ZM0 8 3.5 12 7 8Z" fill="#bbb" />
                    </svg>
                  </SpinBox>
                </SmallItem>
                <SmallItem $off>
                  Zeitskala Beschriftung&nbsp;&nbsp;
                  <Chevron color="#aaa" />
                </SmallItem>
              </SmallColumn>
            </GroupItems>
            <GroupLabel>Zeitskala</GroupLabel>
          </Group>
          <GroupSep />
          <Group $w={424}>
            <GroupItems $pl={5}>
              <LargeButton $w={68} $off>
                <LargeIcon>
                  <IconCompress />
                </LargeIcon>
                Wochenende
                <br />
                komprimieren
              </LargeButton>
              <LargeButton $w={74}>
                <LargeIcon>
                  <IconWorkTime />
                </LargeIcon>
                Arbeitszeiten
              </LargeButton>
              <LargeButton $w={70} $off>
                <LargeIcon>
                  <IconCellHeight />
                </LargeIcon>
                Automatische
                <br />
                Zellenhöhe
              </LargeButton>
              <LargeButton $w={62}>
                <LargeIcon>
                  <IconSnap />
                </LargeIcon>
                <LargeText>
                  Einrasten
                  <br />
                  in Zellen <Chevron />
                </LargeText>
              </LargeButton>
              <ItemSep />
              <LargeButton $w={74}>
                <LargeIcon>
                  <IconAutoSize />
                </LargeIcon>
                Automatische
                <br />
                Termingrösse
              </LargeButton>
              <LargeButton $w={60} $on>
                <LargeIcon>
                  <IconGroupBars />
                </LargeIcon>
                Termine
                <br />
                gruppieren
              </LargeButton>
            </GroupItems>
            <GroupLabel>Layout</GroupLabel>
          </Group>
          <GroupSep />
          <Group $w={131}>
            <GroupItems $pl={8}>
              <SmallColumn $w={120} $gap={8} $pt={2}>
                <SmallItem $tight>
                  <SmallIcon $w={21}>
                    <IconPage badge="search" />
                  </SmallIcon>
                  Druckvorschau
                </SmallItem>
                <SmallItem $tight>
                  <SmallIcon $w={21}>
                    <IconPrinter />
                  </SmallIcon>
                  Schnell-Druck
                </SmallItem>
                <SmallItem $tight>
                  <SmallIcon $w={21}>
                    <IconPage badge="gear" />
                  </SmallIcon>
                  Seiteneinstellungen
                </SmallItem>
              </SmallColumn>
            </GroupItems>
            <GroupLabel>Drucken</GroupLabel>
          </Group>
          <GroupSep />
        </RibbonBody>
      </Ribbon>

      <Workspace>
        <MainColumn>
          <DocHost>
            <DocStrip>
              <DocTab>
                Kalender
                <CloseX size={8} color="#666" />
              </DocTab>
              <svg width="7" height="30" viewBox="0 0 7 30">
                <polygon points="0,10 7,10 3.5,14" fill="#777" />
              </svg>
            </DocStrip>
            <DocBody>
              <ProjectList>
                <ProjectHead>
                  <ProjectHeadCell>Projektbeschr.</ProjectHeadCell>
                  <ProjectHeadCell $line>
                    Auftrag Nr.
                    <HeadFunnel />
                  </ProjectHeadCell>
                </ProjectHead>
                <ProjectRow>
                  <ProjectCell />
                  <ProjectCell>1310</ProjectCell>
                </ProjectRow>
                <ProjectRow>
                  <ProjectCell $indent={16}>Rahmenschalung, Wand, Stahl</ProjectCell>
                  <ProjectCell>1310</ProjectCell>
                </ProjectRow>
                <ProjectSpacer />
                <FilterBar>
                  <FilterRemove>×</FilterRemove>
                  <FilterBracket>
                    <FilterChip $bg="#fde8d8" $line="#f0c0a0">
                      Auftrag Nr.
                    </FilterChip>
                    <FilterChip $bg="#dce6f4" $line="#b0c4e0">
                      Enthält
                    </FilterChip>
                    <FilterChip $bg="#dce8dc" $line="#b0ccb0">
                      1310
                    </FilterChip>
                  </FilterBracket>
                  <FilterEdit>Filter bearbeiten</FilterEdit>
                </FilterBar>
              </ProjectList>

              <Calendar>
                <CalendarTop>
                  <TimeColumn>
                    <TimeSpacer />
                    {hours.map((h) => (
                      <HourCell key={h}>
                        <HourBig>{h}</HourBig>
                        <HourSmall>00</HourSmall>
                      </HourCell>
                    ))}
                    <NowMarker />
                  </TimeColumn>
                  <DayColumn>
                    <ResourceHead>Rahmenschalung, Wand, Stahl</ResourceHead>
                    <DayHead>Montag, 6. Juli</DayHead>
                    <AllDayRow>
                      <AllDayBar>
                        <AllDayStripe />
                        <AllDayTitle>Pneulader</AllDayTitle>
                        <AllDayEnd>
                          bis 10. Jul
                          <svg width="10" height="9" viewBox="0 0 10 9">
                            <path d="M0 3H5V0L10 4.5 5 9V6H0Z" fill="#666" />
                          </svg>
                        </AllDayEnd>
                      </AllDayBar>
                    </AllDayRow>
                    <Slots>
                      <Slot $h={17} $line="#f5f5d8" $bg="#f5f5d8" />
                      <Slot $h={22} $line="#d8d8b8" $bg="#ffffdd" />
                      {Array.from({ length: 28 }, (_, i) => (
                        <Slot
                          key={i}
                          $h={22}
                          $line={i % 2 === 0 ? "#a8a89a" : "#d6d6b6"}
                          $bg={i < 12 ? "#ffffdd" : "#e5e5ca"}
                        />
                      ))}
                      <Appointment $left={0} $width={437} $from="#d5e0ba" $to="#dbe7c2">
                        <AppointmentStripe />
                        <AppointmentText>1301 Magaldi Angelo (H&amp;T)</AppointmentText>
                      </Appointment>
                      <Appointment $left={442} $width={438} $from="#bdd2ee" $to="#c2d6f0">
                        <AppointmentStripe />
                        <AppointmentText>2506 Lieferwagen, -3.5 t, Normalkabine (GB)</AppointmentText>
                      </Appointment>
                    </Slots>
                  </DayColumn>
                  <VScroll>
                    <Tri dir="up" />
                    <VThumb />
                    <Tri dir="down" />
                  </VScroll>
                </CalendarTop>
                <HScroll>
                  <Tri dir="left" />
                  <HScrollGap />
                  <Tri dir="right" />
                  <Navigator>
                    {navGlyphs.map((d, i) => (
                      <NavGlyph key={i} d={d} />
                    ))}
                  </Navigator>
                </HScroll>
              </Calendar>
            </DocBody>
          </DocHost>

          <CollapsedPanel>
            <PanelTitle>Konflikte</PanelTitle>
            <PanelIcons>
              <PanelIcon>
                <CloseX />
              </PanelIcon>
            </PanelIcons>
          </CollapsedPanel>

          <LoadPanel>
            <LoadHead>
              <PanelTitle>Auslastung h</PanelTitle>
              <PanelIcons>
                <PanelIcon>
                  <CloseX />
                </PanelIcon>
              </PanelIcons>
            </LoadHead>
            <LoadGrid>
              <LoadCell />
              <LoadCell $line />
              <LoadCell $line>Totalst</LoadCell>
              <LoadCell $line>06.07.</LoadCell>
              <LoadCell $line />
            </LoadGrid>
          </LoadPanel>
        </MainColumn>

        <Panel title="Gruppenartikel" w={282} max={false}>
          <DataGrid
            cols="23px 18px 109px 1fr"
            head={["Bezeichnung", "Gattung"]}
            filterH={22}
            rowH={21}
            rows={articleNames.map(([a, b, g]) => ({
              a,
              b,
              color: g ? GREEN : undefined,
              bColor: g ? GREEN : "#3f4f8f",
            }))}
          />
        </Panel>

        <RightColumn>
          <Panel title="Gruppen" h={219}>
            <DataGrid
              cols="23px 19px 108px 1fr"
              head={["Nummer", "Bezeichnung"]}
              filterH={22}
              rowH={21}
              rightA
              rows={[
                { a: "4", b: "Gruppe 4" },
                { a: "5", b: "Gruppe 5" },
              ]}
            />
          </Panel>
          <Panel title="Personal" h={225}>
            <DataGrid
              cols="23px 19px 100px 1fr"
              head={["Pers.-Nr.", "Suchname"]}
              filterH={22}
              rowH={21}
              rightA
              thumb={36}
              rows={[
                { a: "1001", b: "Gerber Peter (AD)" },
                { a: "1021", b: "Gruber Ralf (AD)" },
                { a: "1051", b: "Meier Ursula (AD)" },
                { a: "1101", b: "Maurer Peter (BF)" },
                { a: "1102", b: "Hofstetter Ueli (BF)" },
                { a: "1201", b: "Brenner Hansueli (PL)" },
                { a: "1202", b: "Hofmeier Hansueli" },
              ]}
            />
          </Panel>
          <Panel title="Inventar" h={226}>
            <DataGrid
              cols="23px 19px 100px 1fr"
              head={["Inv.-Nr.", "Hierarchiest. 2/Bezei..."]}
              filterH={24}
              rowH={23}
              chevrons
              thumb={36}
              rows={[
                { a: "", b: "" },
                { a: "", b: "Container" },
                { a: "", b: "Dumper" },
                { a: "", b: "Erdbewegung Verdic..." },
                { a: "", b: "Heben, Fördern, Tra..." },
                { a: "", b: "Hebezeuge Transport" },
              ]}
            />
          </Panel>
          <Panel title="Material" fill>
            <DataGrid
              cols="23px 19px 100px 1fr"
              head={["Int(Inv).-Nr.", "Text"]}
              filterH={23}
              rowH={21}
              thumb={36}
              rows={[
                { a: "12", b: "Diesel" },
                { a: "2134.121", b: "Beton CEM, 150  0-1..." },
                { a: "2134.129", b: "Beton CEM, 200  0-1..." },
                { a: "2134.137", b: "Beton CEM, 250  0-1..." },
                { a: "2134.221", b: "Beton CEM, 150  0-3..." },
                { a: "2134.229", b: "Beton CEM, 200  0-3..." },
                { a: "", b: "" },
              ]}
            />
          </Panel>
        </RightColumn>
      </Workspace>

      <ModuleBar>
        {modules.map(([code, color, label]) => (
          <ModuleTab key={code} $active={code === "RP"}>
            <ModuleHex $color={color}>{code}</ModuleHex>
            <ModuleLabel>{label}</ModuleLabel>
          </ModuleTab>
        ))}
        <ModuleMore />
      </ModuleBar>
    </Page>
  );
}
